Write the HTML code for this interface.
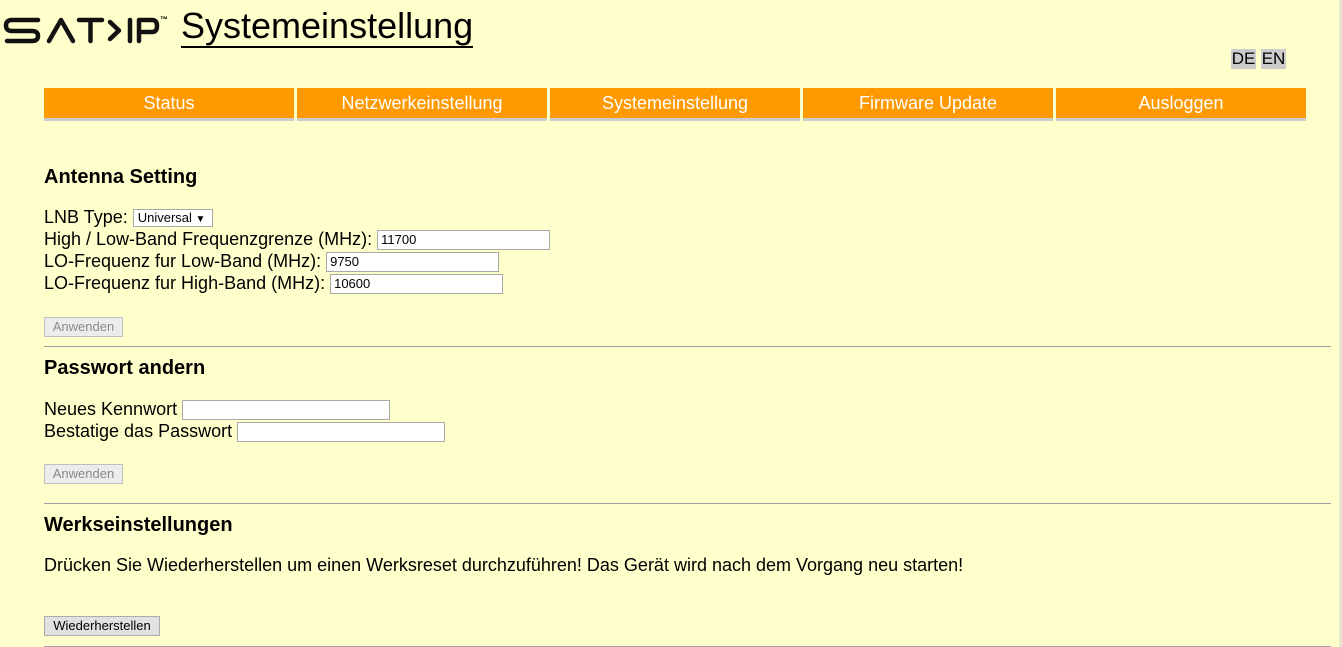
<!DOCTYPE html>
<html><head><meta charset="utf-8"><style>
html,body{margin:0;padding:0;}
body{width:1342px;height:647px;background:#ffffcc;font-family:"Liberation Sans",Arial,sans-serif;position:relative;overflow:hidden;color:#000;}
.a{position:absolute;}
.nav{position:absolute;top:88px;height:30px;width:250px;background:#ff9900;color:#fff;font-size:18px;text-align:center;line-height:30px;border-bottom:3px solid #cccccc;}
h2{position:absolute;margin:0;font-size:20px;font-weight:bold;left:44px;}
.t{position:absolute;left:44px;font-size:18px;line-height:22px;white-space:nowrap;}
.in{display:inline-block;vertical-align:middle;border:1px solid #a9a9a9;background:#fff;font-size:13px;line-height:18px;padding-left:3px;box-sizing:border-box;height:20px;}
.btn{position:absolute;left:44px;height:20px;box-sizing:border-box;border:1px solid #adadad;background:#e1e1e1;font-size:13px;line-height:18px;text-align:center;}
.hr{position:absolute;left:44px;width:1287px;height:1px;background:#a0a0a0;}
.lang{position:absolute;top:49px;height:20px;background:#cccccc;font-size:17px;line-height:20px;width:25px;text-align:center;}
</style></head><body>
<svg class="a" style="left:0;top:10px" width="180" height="40" viewBox="0 0 180 40">
<g fill="none" stroke="#111" stroke-width="4.5" stroke-linecap="round" stroke-linejoin="round">
<path d="M38 10 H12 Q6 10 6 15.5 Q6 21 12 21 H32 Q38 21 38 26 Q38 31 32 31 H7"/>
<path d="M49 31 L61 10 L73 31"/>
<path d="M79 10 H102 M90.5 10 V31"/>
<path d="M110 12 L119 20.5 L110 29"/>
<path d="M130 10 V31"/>
<path d="M139 31 V10 H152 Q157 10 157 16 Q157 22 152 22 H142"/>
</g>
<text x="160" y="12" font-size="8" font-family="Liberation Sans" font-weight="bold">™</text>
</svg>
<div class="a" style="left:181px;top:5px;font-size:36px;line-height:41px;border-bottom:2px solid #000;padding-bottom:0px;">Systemeinstellung</div>
<div class="lang" style="left:1231px">DE</div>
<div class="lang" style="left:1261px">EN</div>
<div class="a" style="left:1339px;top:0;width:3px;height:647px;background:#e8e8d0"></div>
<div class="nav" style="left:44px">Status</div>
<div class="nav" style="left:297px">Netzwerkeinstellung</div>
<div class="nav" style="left:550px">Systemeinstellung</div>
<div class="nav" style="left:803px">Firmware Update</div>
<div class="nav" style="left:1056px">Ausloggen</div>

<h2 style="top:166px">Antenna Setting</h2>
<div class="t" style="top:206px">LNB Type: <span class="in" style="width:80px;height:18px;line-height:16px;padding-left:4px">Universal <span style="font-size:10px">▼</span></span></div>
<div class="t" style="top:228px">High / Low-Band Frequenzgrenze (MHz): <span class="in" style="width:173px">11700</span></div>
<div class="t" style="top:250px">LO-Frequenz fur Low-Band (MHz): <span class="in" style="width:173px">9750</span></div>
<div class="t" style="top:272px">LO-Frequenz fur High-Band (MHz): <span class="in" style="width:173px">10600</span></div>
<div class="btn" style="top:317px;width:79px;color:#8a8a8a;background:#ececec;border-color:#bfbfbf">Anwenden</div>
<div class="hr" style="top:346px"></div>

<h2 style="top:357px">Passwort andern</h2>
<div class="t" style="top:398px">Neues Kennwort <span class="in" style="width:208px"></span></div>
<div class="t" style="top:420px">Bestatige das Passwort <span class="in" style="width:208px"></span></div>
<div class="btn" style="top:464px;width:79px;color:#8a8a8a;background:#ececec;border-color:#bfbfbf">Anwenden</div>
<div class="hr" style="top:503px"></div>

<h2 style="top:514px">Werkseinstellungen</h2>
<div class="t" style="top:554px">Drücken Sie Wiederherstellen um einen Werksreset durchzuführen! Das Gerät wird nach dem Vorgang neu starten!</div>
<div class="btn" style="top:616px;width:116px">Wiederherstellen</div>
<div class="hr" style="top:646px"></div>
</body></html>
